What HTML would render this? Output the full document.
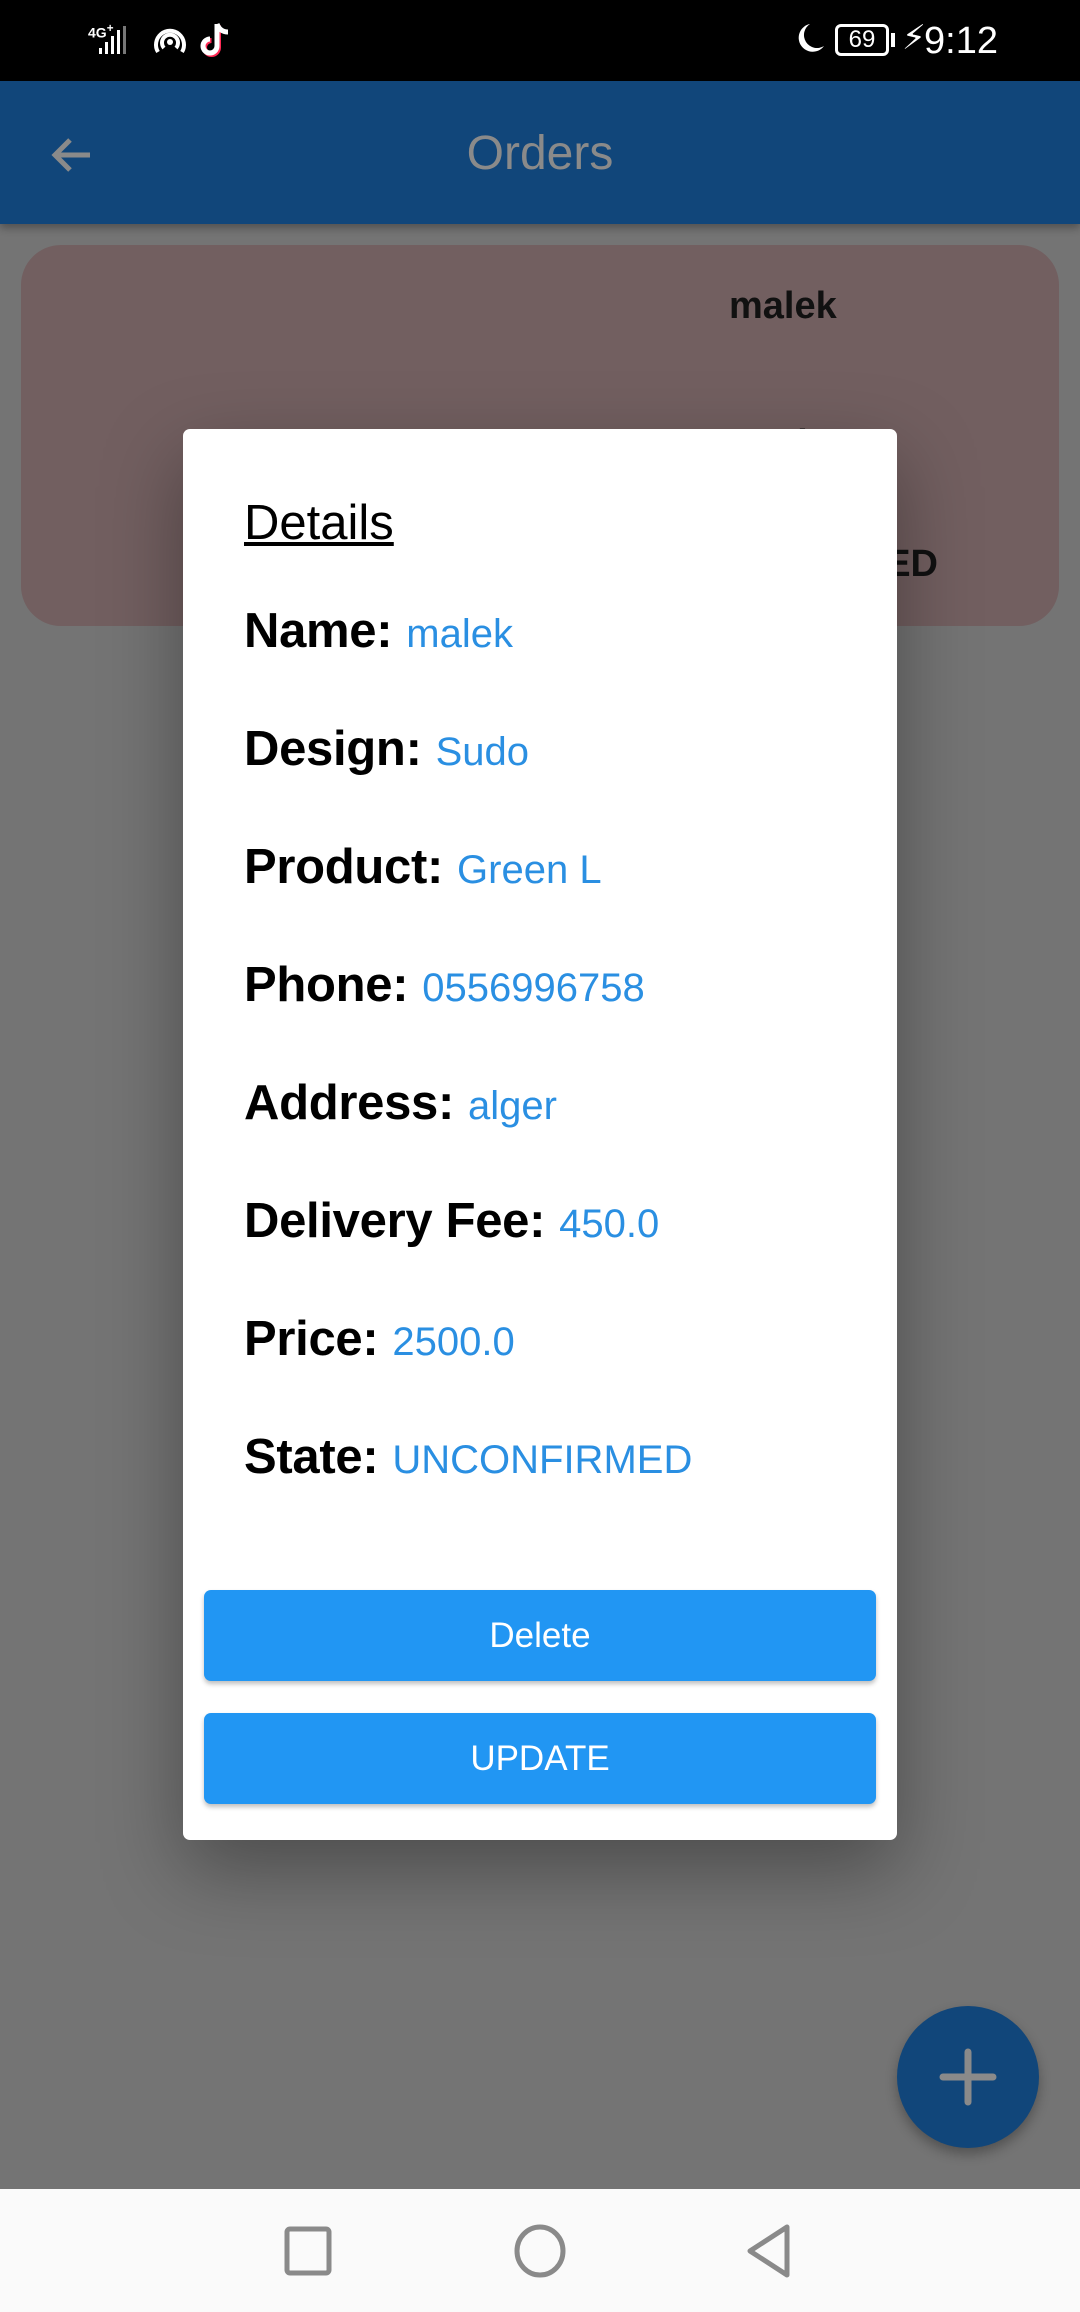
<!DOCTYPE html>
<html><head><meta charset="utf-8"><style>
*{margin:0;padding:0;box-sizing:border-box}
body{width:1080px;height:2312px;position:relative;overflow:hidden;background:#747474;font-family:"Liberation Sans","DejaVu Sans",sans-serif}
.abs{position:absolute}
.sb{left:0;top:0;width:1080px;height:81px;background:#000;color:#fff}
.ab{left:0;top:81px;width:1080px;height:143px;background:#11467a;box-shadow:0 4px 8px rgba(0,0,0,.3)}
.card{left:21px;top:245px;width:1038px;height:381px;background:#725f60;border-radius:40px}
.dlg{left:183px;top:429px;width:714px;height:1411px;background:#fff;border-radius:7px;box-shadow:0 30px 80px rgba(0,0,0,.35)}
.row{position:absolute;left:61px;white-space:nowrap}
.lb{font-weight:bold;font-size:49px;color:#000;letter-spacing:-0.3px}
.v{font-size:40px;color:#2a8fe2;margin-left:14px}
.btn{position:absolute;left:21px;width:672px;height:91px;background:#2196f3;border-radius:7px;color:#fff;font-size:35px;text-align:center;line-height:91px;box-shadow:0 3px 5px rgba(0,0,0,.25)}
.nav{left:0;top:2189px;width:1080px;height:123px;background:#fafafa}
</style></head><body>
<div class="abs sb">
  <div class="abs" style="left:88px;top:22px;font-size:14px;font-weight:bold">4G<sup>+</sup></div>
  <svg class="abs" style="left:95px;top:22px" width="50" height="34"><rect x="4" y="26" width="3" height="6" fill="#fff"/><rect x="10" y="20" width="3" height="12" fill="#fff"/><rect x="16" y="14" width="3" height="18" fill="#fff"/><rect x="22" y="8" width="3" height="24" fill="#fff"/><rect x="28" y="4" width="3" height="28" fill="#777"/></svg>
  <svg class="abs" style="left:152px;top:22px" width="36" height="36"><path d="M6 30 A14 14 0 1 1 30 30" stroke="#fff" stroke-width="4" fill="none"/><path d="M12 26 A8 8 0 1 1 24 26" stroke="#fff" stroke-width="4" fill="none"/><circle cx="18" cy="20" r="3" fill="#fff"/></svg>
  <svg class="abs" style="left:200px;top:20px" width="34" height="38"><path d="M17 4 V26 A7 7 0 1 1 10 19" stroke="#ff2a55" stroke-width="5" fill="none" transform="translate(1.5,1.5)"/><path d="M17 4 V26 A7 7 0 1 1 10 19 M17 4 Q20 12 28 12" stroke="#fff" stroke-width="5" fill="none"/></svg>
  <svg class="abs" style="left:790px;top:20px" width="36" height="40"><path d="M20 4 A14 14 0 1 0 34 26 A12 12 0 0 1 20 4Z" fill="#fff"/></svg>
  <div class="abs" style="left:835px;top:24px;width:54px;height:32px;border:3px solid #fff;border-radius:6px;font-size:24px;text-align:center;line-height:26px">69</div>
  <div class="abs" style="left:891px;top:33px;width:4px;height:14px;background:#fff"></div>
  <div class="abs" style="left:902px;top:18px;font-size:34px">⚡</div>
  <div class="abs" style="left:924px;top:20px;font-size:38px">9:12</div>
</div>
<div class="abs ab">
  <svg class="abs" style="left:48px;top:50px" width="48" height="48"><path d="M42 24 H8 M22 9 L7 24 L22 39" stroke="#8a8a8a" stroke-width="5" fill="none"/></svg>
  <div class="abs" style="left:0;width:1080px;top:45px;text-align:center;font-size:48px;color:#8a8a8a">Orders</div>
</div>
<div class="abs card">
  <div class="abs" style="left:708px;top:40px;font-size:38px;font-weight:bold;color:#111">malek</div>
  <div class="abs" style="left:715px;top:178px;font-size:38px;font-weight:bold;color:#111">Sudo</div>
  <div class="abs" style="left:632px;top:298px;font-size:38px;font-weight:bold;color:#111">UNCONFIRMED</div>
</div>
<div class="abs dlg">
  <div class="row" style="top:66px;font-size:49px;text-decoration:underline;color:#000">Details</div>
  <div class="row" style="top:174px"><span class="lb">Name:</span><span class="v">malek</span></div>
  <div class="row" style="top:292px"><span class="lb">Design:</span><span class="v">Sudo</span></div>
  <div class="row" style="top:410px"><span class="lb">Product:</span><span class="v">Green L</span></div>
  <div class="row" style="top:528px"><span class="lb">Phone:</span><span class="v">0556996758</span></div>
  <div class="row" style="top:646px"><span class="lb">Address:</span><span class="v">alger</span></div>
  <div class="row" style="top:764px"><span class="lb">Delivery Fee:</span><span class="v">450.0</span></div>
  <div class="row" style="top:882px"><span class="lb">Price:</span><span class="v">2500.0</span></div>
  <div class="row" style="top:1000px"><span class="lb">State:</span><span class="v">UNCONFIRMED</span></div>
  <div class="btn" style="top:1161px">Delete</div>
  <div class="btn" style="top:1284px">UPDATE</div>
</div>
<div class="abs" style="left:897px;top:2006px;width:142px;height:142px;border-radius:50%;background:#11467a;box-shadow:0 6px 12px rgba(0,0,0,.3)">
  <svg width="142" height="142"><path d="M71 46 V96 M46 71 H96" stroke="#8a8a8a" stroke-width="7" stroke-linecap="round"/></svg>
</div>
<div class="abs nav">
  <svg class="abs" style="left:0;top:0" width="1080" height="123">
    <rect x="287" y="40" width="42" height="44" rx="3" stroke="#8a8a8a" stroke-width="5" fill="none"/>
    <ellipse cx="540" cy="62" rx="23" ry="24" stroke="#8a8a8a" stroke-width="5" fill="none"/>
    <path d="M787 38 V86 L750 62 Z" stroke="#8a8a8a" stroke-width="5" fill="none" stroke-linejoin="round"/>
  </svg>
</div>
</body></html>
